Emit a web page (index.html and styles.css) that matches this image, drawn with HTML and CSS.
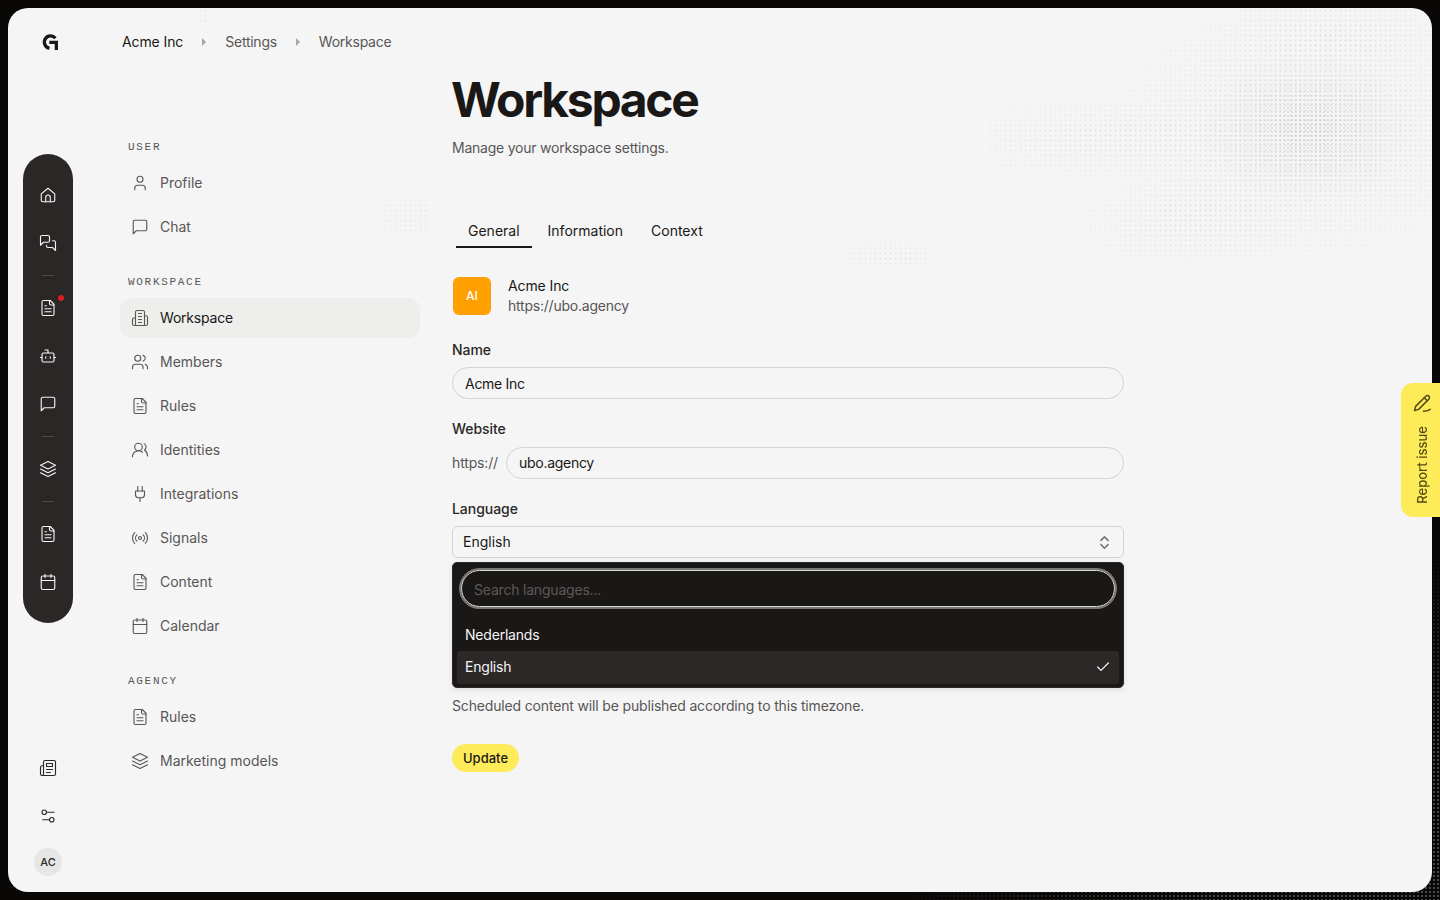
FILE: index.html
```html
<!DOCTYPE html>
<html lang="en">
<head>
    <meta charset="UTF-8">
    <title>Workspace</title>
    <link rel="stylesheet" href="styles.css">
</head>
<body>
    <!-- Icon sprite -->
    <svg class="sprite" xmlns="http://www.w3.org/2000/svg">
        <symbol id="i-home" viewBox="0 0 24 24"><path d="M3 10.500 12 3l9 7.500V19a2 2 0 0 1-2 2H5a2 2 0 0 1-2-2z"/><path d="M9 21v-6a3 3 0 0 1 6 0v6"/></symbol>
        <symbol id="i-chats" viewBox="0 0 24 24"><path d="M14 9a2 2 0 0 1-2 2H6l-4 4V4a2 2 0 0 1 2-2h8a2 2 0 0 1 2 2z"/><path d="M18 9h2a2 2 0 0 1 2 2v11l-4-4h-6a2 2 0 0 1-2-2v-1"/></symbol>
        <symbol id="i-file" viewBox="0 0 24 24"><path d="M15 2H6a2 2 0 0 0-2 2v16a2 2 0 0 0 2 2h12a2 2 0 0 0 2-2V7Z"/><path d="M14 2v4a2 2 0 0 0 2 2h4"/><path d="M10 9H8"/><path d="M16 13H8"/><path d="M16 17H8"/></symbol>
        <symbol id="i-bot" viewBox="0 0 24 24"><path d="M12 8V4H8"/><rect x="4" y="8" width="16" height="12" rx="2"/><path d="M2 14h2"/><path d="M20 14h2"/><path d="M15 13v2"/><path d="M9 13v2"/></symbol>
        <symbol id="i-chat" viewBox="0 0 24 24"><path d="M21 15a2 2 0 0 1-2 2H7l-4 4V5a2 2 0 0 1 2-2h14a2 2 0 0 1 2 2z"/></symbol>
        <symbol id="i-layers" viewBox="0 0 24 24"><path d="M12 2 2 7l10 5 10-5z"/><path d="m2 12 10 5 10-5"/><path d="m2 17 10 5 10-5"/></symbol>
        <symbol id="i-calendar" viewBox="0 0 24 24"><path d="M8 2v4"/><path d="M16 2v4"/><rect x="3" y="4" width="18" height="18" rx="2"/><path d="M3 10h18"/></symbol>
        <symbol id="i-news" viewBox="0 0 24 24"><path d="M4 22h16a2 2 0 0 0 2-2V4a2 2 0 0 0-2-2H8a2 2 0 0 0-2 2v16a2 2 0 0 1-2 2Zm0 0a2 2 0 0 1-2-2v-9c0-1.100.900-2 2-2h2"/><path d="M18 14h-8"/><path d="M15 18h-5"/><path d="M10 6h8v4h-8V6Z"/></symbol>
        <symbol id="i-sliders" viewBox="0 0 24 24"><path d="M20 7h-9"/><path d="M14 17H5"/><circle cx="17" cy="17" r="3"/><circle cx="7" cy="7" r="3"/></symbol>
        <symbol id="i-user" viewBox="0 0 24 24"><path d="M19 21v-2a4 4 0 0 0-4-4H9a4 4 0 0 0-4 4v2"/><circle cx="12" cy="7" r="4"/></symbol>
        <symbol id="i-building" viewBox="0 0 24 24"><path d="M6 22V4a2 2 0 0 1 2-2h8a2 2 0 0 1 2 2v18Z"/><path d="M6 12H4a2 2 0 0 0-2 2v6a2 2 0 0 0 2 2h2"/><path d="M18 9h2a2 2 0 0 1 2 2v9a2 2 0 0 1-2 2h-2"/><path d="M10 6h4"/><path d="M10 10h4"/><path d="M10 14h4"/><path d="M10 18h4"/></symbol>
        <symbol id="i-users" viewBox="0 0 24 24"><path d="M16 21v-2a4 4 0 0 0-4-4H6a4 4 0 0 0-4 4v2"/><circle cx="9" cy="7" r="4"/><path d="M22 21v-2a4 4 0 0 0-3-3.870"/><path d="M16 3.130a4 4 0 0 1 0 7.750"/></symbol>
        <symbol id="i-identity" viewBox="0 0 24 24"><path d="M2 21a8 8 0 0 1 13.300-6"/><circle cx="10" cy="8" r="5"/><path d="M22 20c0-3.400-2-6.500-4-8a5 5 0 0 0-.5-8.500"/></symbol>
        <symbol id="i-plug" viewBox="0 0 24 24"><path d="M12 22v-5"/><path d="M9 8V2"/><path d="M15 8V2"/><path d="M18 8v5a4 4 0 0 1-4 4h-4a4 4 0 0 1-4-4V8Z"/></symbol>
        <symbol id="i-signal" viewBox="0 0 24 24"><path d="M4.900 19.100C1 15.200 1 8.800 4.900 4.900"/><path d="M7.800 16.200c-2.300-2.300-2.300-6.100 0-8.500"/><circle cx="12" cy="12" r="2"/><path d="M16.200 7.800c2.300 2.300 2.300 6.100 0 8.500"/><path d="M19.100 4.900C23 8.800 23 15.100 19.100 19"/></symbol>
    </svg>

    <div class="frame">
        <!-- Background dot texture -->
        <div class="dots dots-main"></div>
        <div class="dots dots-core"></div>
        <div class="dots dots-nav"></div>
        <div class="dots dots-tabs"></div>
        <div class="dots dots-top"></div>

        <aside class="rail">
            <svg class="logo" viewBox="0 0 16 16"><path d="M13.400 4.200A6.200 6.200 0 1 0 7.500 14.200"/><path class="logo-fill" d="M7.300 6.700H16V16h-3.300v-5.900H7.300z"/></svg>
            <div class="rail-pill">
                <a class="rail-item"><svg class="icon"><use href="#i-home"/></svg></a>
                <a class="rail-item"><svg class="icon"><use href="#i-chats"/></svg></a>
                <div class="rail-sep"></div>
                <a class="rail-item"><svg class="icon"><use href="#i-file"/></svg><span class="rail-badge"></span></a>
                <a class="rail-item"><svg class="icon"><use href="#i-bot"/></svg></a>
                <a class="rail-item"><svg class="icon"><use href="#i-chat"/></svg></a>
                <div class="rail-sep"></div>
                <a class="rail-item"><svg class="icon"><use href="#i-layers"/></svg></a>
                <div class="rail-sep"></div>
                <a class="rail-item"><svg class="icon"><use href="#i-file"/></svg></a>
                <a class="rail-item"><svg class="icon"><use href="#i-calendar"/></svg></a>
            </div>
            <div class="rail-bottom">
                <a class="rail-item"><svg class="icon"><use href="#i-news"/></svg></a>
                <a class="rail-item"><svg class="icon"><use href="#i-sliders"/></svg></a>
                <div class="user-chip">AC</div>
            </div>
        </aside>

        <div class="page">
            <header class="crumbs">
                <span class="crumb-root">Acme Inc</span>
                <span class="crumb-caret"></span>
                <span>Settings</span>
                <span class="crumb-caret"></span>
                <span>Workspace</span>
            </header>

            <div class="columns">
                <nav class="side-nav">
                    <div class="nav-label">USER</div>
                    <a class="nav-item"><svg class="icon"><use href="#i-user"/></svg>Profile</a>
                    <a class="nav-item"><svg class="icon"><use href="#i-chat"/></svg>Chat</a>

                    <div class="nav-label">WORKSPACE</div>
                    <a class="nav-item active"><svg class="icon"><use href="#i-building"/></svg>Workspace</a>
                    <a class="nav-item"><svg class="icon"><use href="#i-users"/></svg>Members</a>
                    <a class="nav-item"><svg class="icon"><use href="#i-file"/></svg>Rules</a>
                    <a class="nav-item"><svg class="icon"><use href="#i-identity"/></svg>Identities</a>
                    <a class="nav-item"><svg class="icon"><use href="#i-plug"/></svg>Integrations</a>
                    <a class="nav-item"><svg class="icon"><use href="#i-signal"/></svg>Signals</a>
                    <a class="nav-item"><svg class="icon"><use href="#i-file"/></svg>Content</a>
                    <a class="nav-item"><svg class="icon"><use href="#i-calendar"/></svg>Calendar</a>

                    <div class="nav-label">AGENCY</div>
                    <a class="nav-item"><svg class="icon"><use href="#i-file"/></svg>Rules</a>
                    <a class="nav-item"><svg class="icon"><use href="#i-layers"/></svg>Marketing models</a>
                </nav>

                <main class="content">
                    <h1>Workspace</h1>
                    <p class="subtitle">Manage your workspace settings.</p>

                    <div class="tabs">
                        <a class="tab active">General</a>
                        <a class="tab">Information</a>
                        <a class="tab">Context</a>
                    </div>

                    <div class="org">
                        <div class="org-avatar">AI</div>
                        <div>
                            <div class="org-name">Acme Inc</div>
                            <div class="org-url">https://ubo.agency</div>
                        </div>
                    </div>

                    <label class="field-label">Name</label>
                    <div class="text-input">Acme Inc</div>

                    <label class="field-label label-website">Website</label>
                    <div class="prefixed">
                        <span class="prefix">https://</span>
                        <div class="text-input">ubo.agency</div>
                    </div>

                    <label class="field-label">Language</label>
                    <div class="select">
                        English
                        <svg class="select-icon" viewBox="0 0 24 24"><path d="m7 15 5 5 5-5"/><path d="m7 9 5-5 5 5"/></svg>
                    </div>
                    <div class="dropdown">
                        <div class="dropdown-search">Search languages...</div>
                        <div class="dropdown-item">Nederlands</div>
                        <div class="dropdown-item selected">
                            English
                            <svg class="check" viewBox="0 0 24 24"><path d="M20 6 9 17l-5-5"/></svg>
                        </div>
                    </div>
                    <p class="help">Scheduled content will be published according to this timezone.</p>

                    <button class="update-btn">Update</button>
                </main>
            </div>
        </div>
    </div>

    <div class="report-tab">
        <svg class="report-icon" viewBox="0 0 24 24"><path d="M17 3a2.850 2.830 0 1 1 4 4L7.500 20.500 2 22l1.500-5.500Z"/><path d="m15 5 4 4"/><path d="M14 23c3.500 0 6-.8 9-2.600"/></svg>
        <span class="report-text">Report issue</span>
    </div>
</body>
</html>
```

FILE: styles.css
```css
* {
    box-sizing: border-box;
}
body {
    position: relative;
    margin: 0;
    height: 900px;
    overflow: hidden;
    padding: 8px;
    font-family: Inter, "Liberation Sans", sans-serif;
    font-size: 14px;
    line-height: 20px;
    color: #1a1817;
    background-color: #0a0807;
}
/* Faint dots on the dark edge, bottom right */
body::before {
    content: '';
    position: absolute;
    top: 550px;
    left: 900px;
    width: 540px;
    height: 350px;
    background-image: radial-gradient(circle, #4a4a4a 0.8px, transparent 1.1px);
    background-size: 4px 4px;
    -webkit-mask-image: radial-gradient(ellipse 540px 350px at 100% 100%, #000 40%, transparent);
    mask-image: radial-gradient(ellipse 540px 350px at 100% 100%, #000 40%, transparent);
}
a {
    color: inherit;
    text-decoration: none;
}
.sprite {
    display: none;
}
.icon {
    width: 18px;
    height: 18px;
    flex-shrink: 0;
    fill: none;
    stroke: currentColor;
    stroke-width: 1.5;
    stroke-linecap: round;
    stroke-linejoin: round;
}

/* Frame */
.frame {
    position: relative;
    display: flex;
    height: 884px;
    border-radius: 20px;
    overflow: hidden;
    background-color: #f5f5f5;
}
.dots {
    position: absolute;
    background-image: radial-gradient(circle, #cdcdcd 0.9px, transparent 1.2px);
    background-size: 5px 5px;
}
.dots-main {
    top: 0;
    left: 980px;
    width: 444px;
    height: 262px;
    -webkit-mask-image:
        radial-gradient(ellipse 210px 140px at 320px 120px, rgba(0,0,0,0.7), transparent),
        radial-gradient(ellipse 130px 40px at 350px 25px, rgba(0,0,0,0.4), transparent),
        radial-gradient(ellipse 170px 45px at 110px 130px, rgba(0,0,0,0.45), transparent),
        radial-gradient(ellipse 120px 55px at 200px 215px, rgba(0,0,0,0.45), transparent);
    mask-image:
        radial-gradient(ellipse 210px 140px at 320px 120px, rgba(0,0,0,0.7), transparent),
        radial-gradient(ellipse 130px 40px at 350px 25px, rgba(0,0,0,0.4), transparent),
        radial-gradient(ellipse 170px 45px at 110px 130px, rgba(0,0,0,0.45), transparent),
        radial-gradient(ellipse 120px 55px at 200px 215px, rgba(0,0,0,0.45), transparent);
}
.dots-core {
    top: 30px;
    left: 1190px;
    width: 234px;
    height: 180px;
    background-image: radial-gradient(circle, #d0d0d0 1px, transparent 1.4px);
    background-size: 4px 4px;
    -webkit-mask-image: radial-gradient(ellipse 110px 75px at 110px 90px, rgba(0,0,0,0.8), transparent);
    mask-image: radial-gradient(ellipse 110px 75px at 110px 90px, rgba(0,0,0,0.8), transparent);
}
.dots-nav {
    top: 185px;
    left: 360px;
    width: 62px;
    height: 42px;
    opacity: 0.25;
    -webkit-mask-image: radial-gradient(ellipse at 70% 60%, #000 30%, transparent 75%);
    mask-image: radial-gradient(ellipse at 70% 60%, #000 30%, transparent 75%);
}
.dots-tabs {
    top: 228px;
    left: 835px;
    width: 95px;
    height: 30px;
    opacity: 0.3;
    -webkit-mask-image: radial-gradient(ellipse at 50% 70%, #000 30%, transparent 75%);
    mask-image: radial-gradient(ellipse at 50% 70%, #000 30%, transparent 75%);
}
.dots-top {
    top: 0;
    left: 180px;
    width: 30px;
    height: 20px;
    opacity: 0.2;
    -webkit-mask-image: radial-gradient(ellipse, #000 30%, transparent 75%);
    mask-image: radial-gradient(ellipse, #000 30%, transparent 75%);
}

/* Left rail */
.rail {
    position: relative;
    display: flex;
    flex-direction: column;
    align-items: center;
    width: 80px;
    padding: 26px 0 16px;
    color: #2a2726;
}
.logo {
    width: 16px;
    height: 16px;
    margin-left: 4px;
    overflow: visible;
    fill: none;
    stroke: #1a1817;
    stroke-width: 3.3;
}
.logo-fill {
    fill: #1a1817;
    stroke: none;
}
.rail-pill {
    display: flex;
    flex-direction: column;
    align-items: center;
    gap: 16px;
    width: 50px;
    margin-top: 104px;
    padding: 25px 0;
    border-radius: 25px;
    color: #f5f5f5;
    background-color: #2a2726;
}
.rail-item {
    position: relative;
    display: flex;
    align-items: center;
    justify-content: center;
    width: 32px;
    height: 32px;
}
.rail-sep {
    width: 12px;
    height: 1px;
    background-color: #4a4746;
}
.rail-badge {
    position: absolute;
    top: 3px;
    right: 0;
    width: 6px;
    height: 6px;
    border-radius: 50%;
    background-color: #d92020;
}
.rail-bottom {
    display: flex;
    flex-direction: column;
    align-items: center;
    gap: 16px;
    margin-top: auto;
}
.user-chip {
    display: flex;
    align-items: center;
    justify-content: center;
    width: 28px;
    height: 28px;
    border-radius: 50%;
    font-size: 11px;
    font-weight: 500;
    background-color: #e7e6e5;
}

/* Breadcrumbs */
.page {
    position: relative;
    flex: 1;
    padding-left: 32px;
}
.crumbs {
    display: flex;
    align-items: center;
    gap: 19px;
    height: 68px;
    padding-left: 2px;
    letter-spacing: -0.25px;
    color: #595655;
}
.crumb-root {
    letter-spacing: -0.1px;
    color: #1a1817;
}
.crumb-caret {
    width: 0;
    height: 0;
    border-left: 4.5px solid #a8a6a4;
    border-top: 4px solid transparent;
    border-bottom: 4px solid transparent;
}

/* Settings nav */
.columns {
    display: flex;
    gap: 32px;
}
.side-nav {
    display: flex;
    flex-direction: column;
    width: 300px;
    padding-top: 64px;
}
.nav-label {
    height: 14px;
    margin: 24px 0 9px;
    padding-left: 8px;
    font-family: "Liberation Mono", monospace;
    font-size: 11px;
    line-height: 15px;
    letter-spacing: 1.7px;
    color: #595655;
}
.side-nav .nav-label:first-child {
    margin-top: 0;
}
.nav-item {
    display: flex;
    align-items: center;
    gap: 11px;
    height: 40px;
    margin-bottom: 4px;
    padding-left: 11px;
    border-radius: 12px;
    color: #595655;
}
.nav-item.active {
    letter-spacing: -0.2px;
    color: #1a1817;
    background-color: #eeeeec;
}
.nav-item.active .icon {
    color: #595655;
}

/* Content */
.content {
    width: 672px;
}
h1 {
    margin: 0 0 0 -1px;
    font-size: 48px;
    line-height: 48px;
    font-weight: 700;
    letter-spacing: -2.3px;
}
.subtitle {
    margin: 14px 0 0;
    letter-spacing: -0.23px;
    color: #595655;
}
.tabs {
    display: flex;
    gap: 4px;
    margin-top: 57px;
    padding-left: 4px;
}
.tab {
    padding: 6px 12px 5px;
    border-bottom: 2px solid transparent;
}
.tab.active {
    border-bottom-color: #1a1817;
}
.org {
    display: flex;
    align-items: center;
    gap: 17px;
    margin: 28px 0 0 1px;
}
.org-avatar {
    display: flex;
    align-items: center;
    justify-content: center;
    width: 38px;
    height: 38px;
    border-radius: 6px;
    font-size: 12px;
    font-weight: 500;
    color: #fff;
    background-color: #ff9f00;
}
.org-name {
    letter-spacing: -0.1px;
}
.org-url {
    letter-spacing: -0.22px;
    color: #595655;
}
.field-label {
    display: block;
    margin: 20px 0 7px;
    font-weight: 500;
    letter-spacing: -0.05px;
    color: #2a2726;
}
.org + .field-label {
    margin-top: 24px;
}
.label-website {
    margin-bottom: 8px;
}
.text-input {
    flex: 1;
    height: 32px;
    padding: 6px 12px;
    border: 1px solid #d4d4d2;
    border-radius: 16px;
    letter-spacing: -0.28px;
}
.prefixed {
    display: flex;
    align-items: center;
    gap: 8px;
}
.prefixed .text-input {
    padding-top: 5px;
}
.prefix {
    letter-spacing: -0.15px;
    color: #595655;
}
.select {
    display: flex;
    align-items: center;
    justify-content: space-between;
    height: 32px;
    padding: 0 10px;
    border: 1px solid #d4d4d2;
    border-radius: 6px;
}
.select-icon {
    width: 17px;
    height: 17px;
    fill: none;
    stroke: #6f6d6b;
    stroke-width: 2;
    stroke-linecap: round;
    stroke-linejoin: round;
}
.dropdown {
    margin-top: 4px;
    padding: 7px 4px 3px;
    border: 1px solid #2b2827;
    border-radius: 5px;
    letter-spacing: -0.2px;
    color: #f5f5f5;
    background-color: #1a1817;
    box-shadow: 0 2px 6px rgba(0, 0, 0, 0.1);
}
.dropdown-search {
    height: 37px;
    margin: 0 4px 12px;
    padding: 9px 12px 7px;
    border: 1px solid #d8d8d6;
    border-radius: 19px;
    box-shadow: 0 0 0 2px #7a7876;
    color: #5c5958;
}
.dropdown-item {
    display: flex;
    align-items: center;
    justify-content: space-between;
    height: 32px;
    padding: 0 8px;
    border-radius: 3px;
}
.dropdown-item.selected {
    height: 33px;
    padding-bottom: 1px;
    background-color: #2b2827;
}
.check {
    width: 16px;
    height: 16px;
    fill: none;
    stroke: #f5f5f5;
    stroke-width: 1.8;
    stroke-linecap: round;
    stroke-linejoin: round;
}
.help {
    margin: 8px 0 0;
    letter-spacing: -0.16px;
    color: #595655;
}
.update-btn {
    display: block;
    height: 28px;
    margin-top: 28px;
    padding: 0 11px;
    border: 0;
    border-radius: 14px;
    font-family: inherit;
    font-size: 13px;
    font-weight: 500;
    color: #1a1817;
    background-color: #fdeb5a;
}

/* Report tab */
.report-tab {
    position: absolute;
    top: 383px;
    right: 0;
    display: flex;
    flex-direction: column;
    align-items: center;
    gap: 14px;
    width: 39px;
    height: 134px;
    padding: 11px 0 0 2px;
    border-radius: 12px 0 0 12px;
    color: #544c14;
    background-color: #fdeb5a;
}
.report-icon {
    width: 18px;
    height: 18px;
    overflow: visible;
    fill: none;
    stroke: currentColor;
    stroke-width: 2;
    stroke-linecap: round;
    stroke-linejoin: round;
}
.report-text {
    writing-mode: vertical-rl;
    transform: rotate(180deg);
    font-size: 13px;
    line-height: 16px;
    font-weight: 500;
}
```
